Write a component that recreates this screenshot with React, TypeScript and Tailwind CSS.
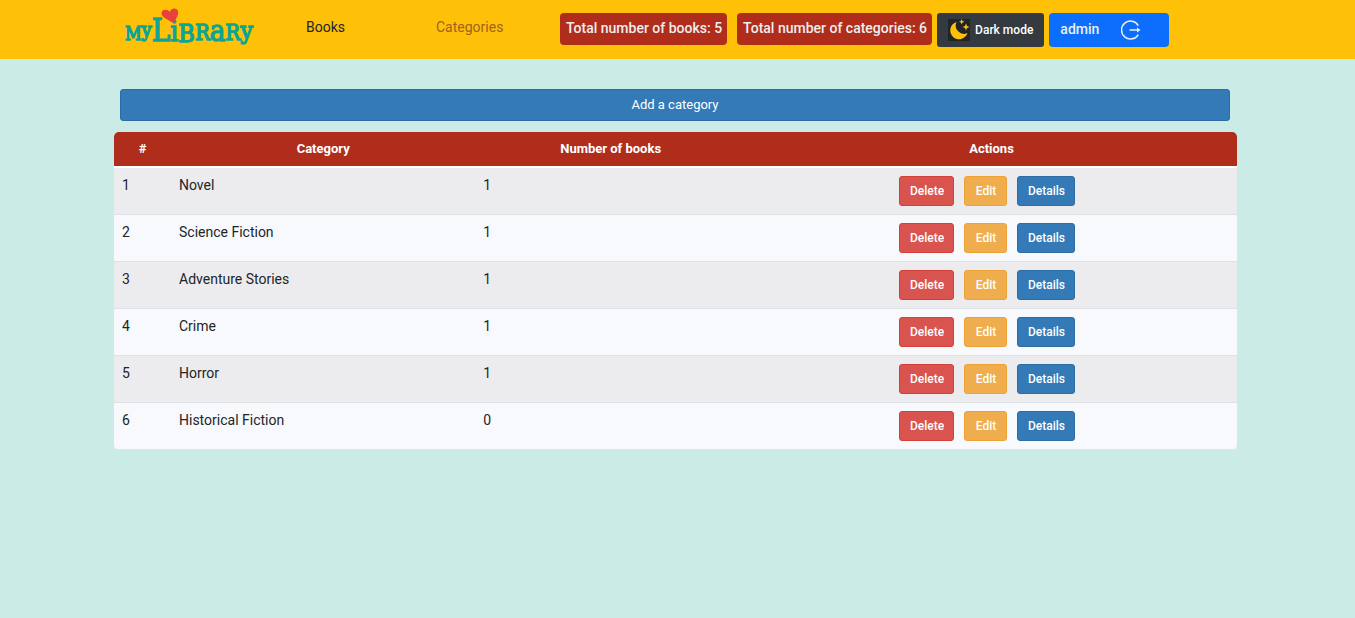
import React from "react";

type Category = { id: number; name: string; books: number };

const categories: Category[] = [
  { id: 1, name: "Novel", books: 1 },
  { id: 2, name: "Science Fiction", books: 1 },
  { id: 3, name: "Adventure Stories", books: 1 },
  { id: 4, name: "Crime", books: 1 },
  { id: 5, name: "Horror", books: 1 },
  { id: 6, name: "Historical Fiction", books: 0 },
];

function Logo() {
  return (
    <svg
      width="136"
      height="48"
      viewBox="0 0 136 48"
      role="img"
      aria-label="My Library"
      className="block fill-[#0aa597] font-['DejaVu_Serif_Condensed','DejaVu_Serif',serif]"
    >
      <text x="3" y="35" stroke="#0aa597" strokeWidth="1.3">
        <tspan fontSize="18">M</tspan>
        <tspan fontSize="20" dy="-3">y</tspan>
        <tspan fontSize="31" dy="4">L</tspan>
        <tspan fontSize="28">i</tspan>
        <tspan fontSize="25" dy="1">B</tspan>
        <tspan fontSize="22" dy="-2">R</tspan>
        <tspan fontSize="29" dy="1">a</tspan>
        <tspan fontSize="22" dy="-1">R</tspan>
        <tspan fontSize="25" dy="-1">y</tspan>
      </text>
      <path
        className="fill-[#e8403a]"
        d="M51.500 18C47 15 39.500 13 39.500 8C39.500 4 45.500 3.500 48 7C48.500 3 54.500 2 56 6C57 10 54 14 51.500 18Z"
      />
    </svg>
  );
}

function MoonIcon() {
  return (
    <svg width="22" height="22" viewBox="0 0 22 22" aria-hidden="true" className="shrink-0">
      <rect width="22" height="22" fill="#212529" />
      <g fill="#ffc107">
        <path d="M8.500 3A8.800 8.800 0 1 0 19.500 14A8.300 8.300 0 0 1 8.500 3Z" />
        <path d="M13.700 0L14.500 1.900L16.400 2.700L14.500 3.500L13.700 5.400L12.900 3.500L11 2.700L12.900 1.900Z" />
        <path d="M18 4.500L19 7L21.500 8L19 9L18 11.500L17 9L14.500 8L17 7Z" />
      </g>
    </svg>
  );
}

function LogoutIcon() {
  return (
    <svg
      width="20"
      height="20"
      viewBox="0 0 20 20"
      fill="none"
      stroke="currentColor"
      strokeWidth="1.500"
      aria-hidden="true"
    >
      <path d="M17.300 5.500A9 9 0 1 0 17.300 14.500" />
      <path d="M8.500 10H17" />
      <path d="M16 7.500L19.500 10L16 12.500Z" fill="currentColor" stroke="none" />
    </svg>
  );
}

const actionBase = "h-[30px] rounded-[3px] border text-xs leading-[18px] font-medium text-white";
const cell = "border-b border-[#dee2e6] px-2 pt-[7px] leading-5";
const badge = "rounded bg-[#b02d1c] pt-1 pr-[5px] pb-[6px] pl-[6px] font-medium leading-[22px]";

export default function App() {
  return (
    <div className="min-h-screen bg-[#cbebe7] font-['Roboto',sans-serif] text-sm text-[#212529]">
      <header className="bg-[#ffc107]">
        <nav className="mx-auto flex h-[59px] w-full max-w-[1127px] items-start pl-2 text-[#eeeeee]">
          <a href="#home" className="mt-[5px]"><Logo /></a>
          <a href="#books" className="ml-12 mt-[17px] w-[130px] leading-5 text-[#212529]">Books</a>
          <a href="#categories" className="mt-[17px] w-[124px] leading-5 text-[#a16221]">Categories</a>
          <div className="mt-[13px] flex items-start whitespace-nowrap">
            <span className={badge}>Total number of books: 5</span>
            <span className={`${badge} ml-[10px]`}>Total number of categories: 6</span>
            <button
              type="button"
              className="ml-[5px] flex h-[34px] items-center gap-[5px] rounded-[3px] bg-[#343a40] px-[11px] pb-px text-xs font-medium text-white"
            >
              <MoonIcon />
              Dark mode
            </button>
            <button
              type="button"
              className="ml-[5px] flex h-[34px] w-[120px] items-center gap-[22px] rounded bg-[#0d6efd] pl-[11px] font-medium"
            >
              <span className="pb-[2px]">admin</span>
              <LogoutIcon />
            </button>
          </div>
        </nav>
      </header>

      <main className="mx-auto w-full max-w-[1127px] pr-1 pt-[30px]">
        <div className="pl-[6px] pr-[7px]">
          <button
            type="button"
            className="h-8 w-full rounded-[3px] border border-[#2e6da4] bg-[#337ab7] text-[13px] text-white"
          >
            Add a category
          </button>
        </div>
        <div className="mt-[11px] overflow-hidden rounded-[5px]">
          <table className="w-full table-fixed border-separate border-spacing-0">
            <colgroup>
              <col className="w-[57px]" />
              <col className="w-[27.1%]" />
              <col className="w-[24.1%]" />
              <col />
            </colgroup>
            <thead>
              <tr className="h-9 bg-[#b02d1c] text-[13px] font-bold text-white">
                <th scope="col" className="border-b-2 border-white p-0">#</th>
                <th scope="col" className="border-b-2 border-white p-0">Category</th>
                <th scope="col" className="border-b-2 border-white p-0">Number of books</th>
                <th scope="col" className="border-b-2 border-white p-0">Actions</th>
              </tr>
            </thead>
            <tbody>
              {categories.map((c) => (
                <tr key={c.id} className="h-[47px] align-top odd:bg-[#ececee] even:bg-[#f8f9fc]">
                  <td className={cell}>{c.id}</td>
                  <td className={cell}>{c.name}</td>
                  <td className={cell}>{c.books}</td>
                  <td className="border-b border-[#dee2e6] p-0 pt-2">
                    <div className="flex justify-center gap-[10px] pr-2">
                      <button type="button" className={`${actionBase} w-[55px] border-[#d43f3a] bg-[#d9534f]`}>Delete</button>
                      <button type="button" className={`${actionBase} w-[43px] border-[#eea236] bg-[#f0ad4e]`}>Edit</button>
                      <button type="button" className={`${actionBase} w-[58px] border-[#2e6da4] bg-[#337ab7]`}>Details</button>
                    </div>
                  </td>
                </tr>
              ))}
            </tbody>
          </table>
        </div>
      </main>
    </div>
  );
}
